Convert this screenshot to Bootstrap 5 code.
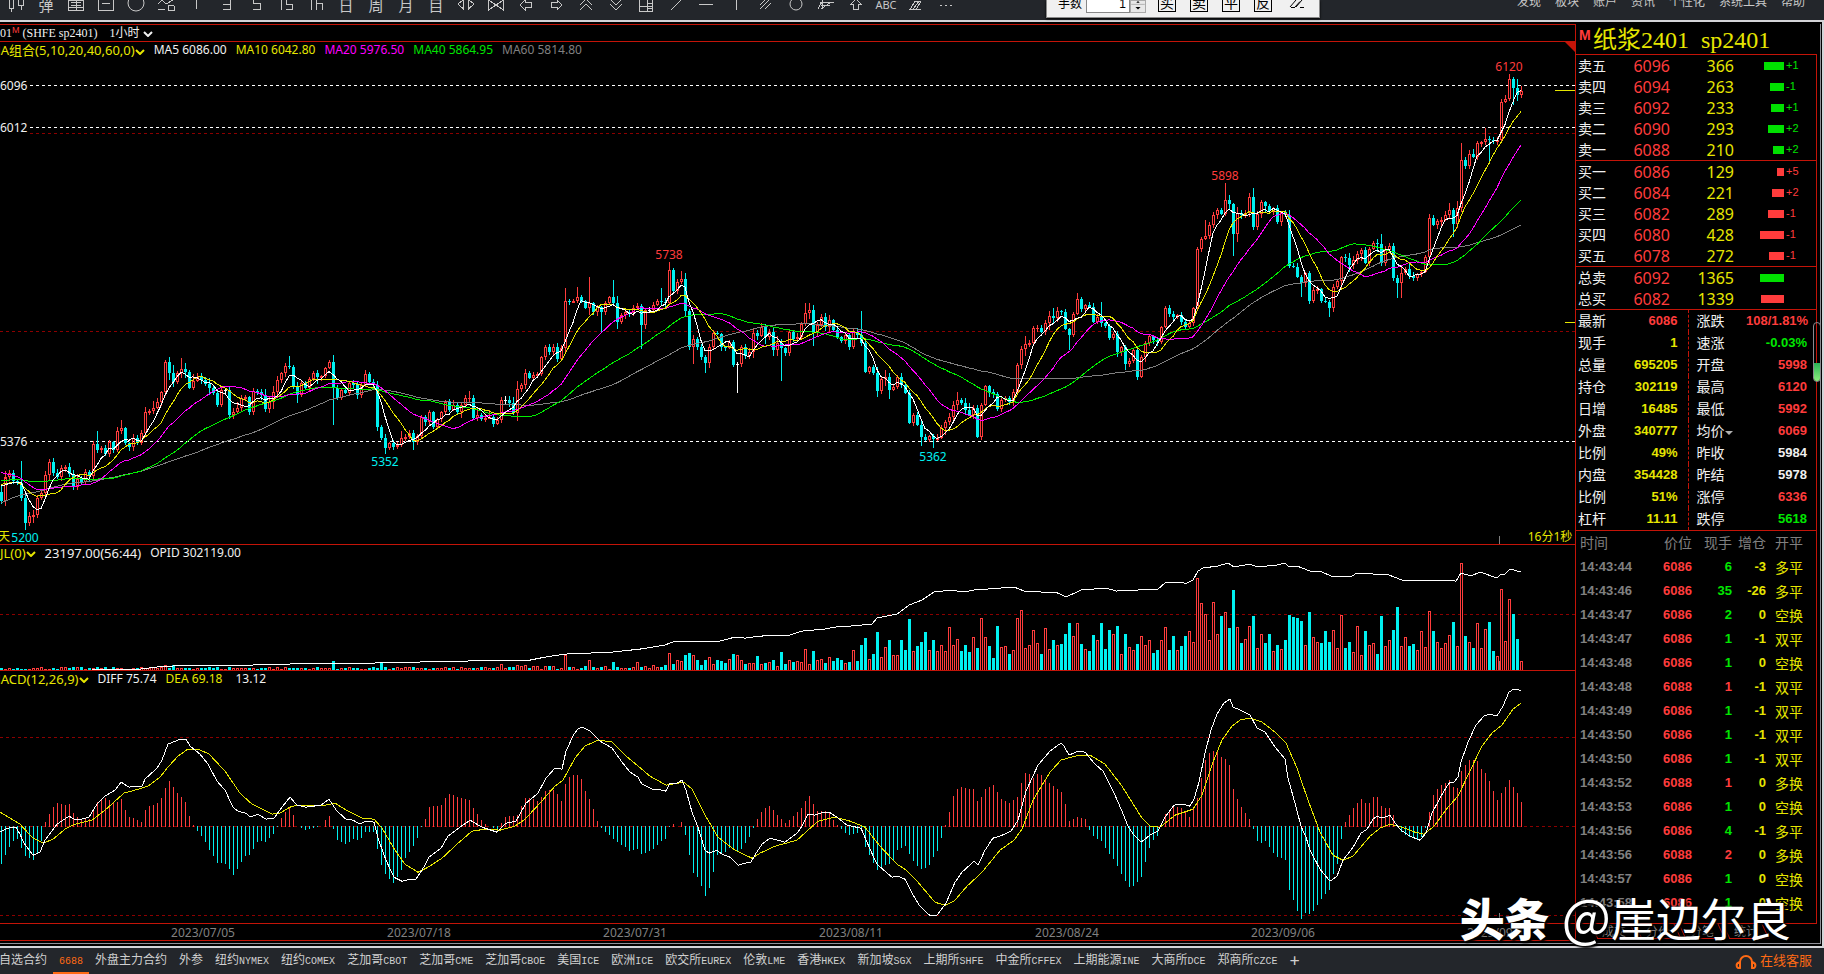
<!DOCTYPE html>
<html lang="zh-CN">
<head>
<meta charset="utf-8">
<title>纸浆2401 sp2401</title>
<meta name="viewport" content="width=device-width, initial-scale=1">
<link href="https://cdn.jsdelivr.net/npm/bootstrap@5.3.0/dist/css/bootstrap.min.css" rel="stylesheet">
<style>
:root{--up:#ff3c3c;--down:#00f0f0;--yel:#e6e600;--grn:#00e600;--line:#c41408;--gry:#808080}
body{background:#23262b;color:#f0f0f0;font-family:"Noto Sans","Noto Sans CJK SC",sans-serif;font-size:12px;line-height:16px;overflow:hidden}
button{font:inherit;color:inherit;background:none;border:0;padding:0}
.c-up{color:var(--up)}.c-down{color:var(--down)}.c-yel{color:var(--yel)}.c-grn{color:var(--grn)}.c-gry{color:var(--gry)}.c-mag{color:#ff00ff}
/* top bar */
.topbar{height:20px;color:#c8c8c8}
.tools{height:20px;padding-left:1px}
.tools button{width:30px;height:20px;flex:none;position:relative;overflow:hidden}
.tools svg{display:block;width:30px;height:20px;fill:none;stroke:#c8c8c8;shape-rendering:crispEdges}
.tools .glyph{font-size:15px;line-height:20px;margin-top:-10px;height:20px}
.mainmenu{gap:14px;padding-right:19px;margin-top:-6px;white-space:nowrap}
.mainmenu a{color:#c8c8c8;text-decoration:none}
.order{left:1046px;top:0;width:274px;height:18px;background:#f0f0f0;color:#000;border:1px solid #8a8a8a;border-top:0;z-index:5;padding-left:11px;box-shadow:0 1px 2px #000}
.order label{margin-top:-4px;width:28px}
.order input{width:44px;height:19px;margin-top:-6px;border:1px solid #888;background:#fff;text-align:right;padding:0 3px;font:12px "Liberation Sans",sans-serif;border-radius:0}
.spin{width:16px;height:13px;border:1px solid #aaa;background:#e8e8e8;margin-right:12px}
.obtn{width:18px;height:19px;margin-top:-7px;border:1px solid #000;margin-right:14px;font-size:14px;line-height:14px;overflow:hidden;position:relative}
/* workspace */
.work{border:2px solid #d4d4d8;border-left:0;background:#000;padding:2px 1px 2px 0;min-height:0}
.inner{border-right:1px solid #909098;border-bottom:1px solid #909098;padding:0 3px 2px 0;min-height:0}
.charts{min-width:0;border:1px solid var(--line);border-left:0}
.crow{height:16px;white-space:nowrap;flex:none;line-height:16px;gap:9px}
.crow .fn{font-size:13px}
.cutm{margin-left:-11px}
.symbol{height:17px;border-bottom:1px solid var(--line);font-family:"Liberation Serif","Noto Sans CJK SC",serif;flex:none;font-size:12px;line-height:16px}
.pane{min-height:0;position:relative;overflow:hidden;border-bottom:1px solid var(--line)}
.pane svg{display:block;width:100%;height:100%;position:absolute;inset:0}
.pin{position:absolute;transform:translate(-50%,-50%);line-height:14px;white-space:nowrap}
.pin.lv{left:0;transform:translateY(-50%);background:#000}
.chev{width:10px;height:6px;fill:none;stroke:currentColor;stroke-width:2}
.p1{flex:485 1 0}.p2{flex:109 1 0}.p3{flex:236 1 0}
.dates{height:16px;flex:none;position:relative;color:var(--gry);overflow:hidden}
.dates span{position:absolute;top:1px;line-height:15px;transform:translateX(-50%)}
/* quote side */
.side{width:241px;flex:none;position:relative}
.name{height:30px;flex:none;padding-left:3px;font:24px/32px "Liberation Serif","Noto Sans CJK SC",serif;color:var(--yel);white-space:nowrap}
.name b{font:bold 14px/22px "Liberation Sans",sans-serif;width:14px}
.box{border-right:1px solid var(--line);border-top:1px solid var(--line)}
table{width:100%;table-layout:fixed;border-collapse:collapse}
td,th{padding:0;white-space:nowrap;font-weight:400}
.depth td{height:21px;line-height:20px;font-size:16px}
.depth th{font-size:14px;width:46px;padding-left:2px;line-height:20px}
.depth td:nth-child(2){width:48px;text-align:right;color:var(--up)}
.depth td:nth-child(3){width:64px;text-align:right;color:var(--yel)}
.depth td.dv{font:11px/19px "Liberation Sans",sans-serif}
.vbar{display:inline-block;height:8px;vertical-align:middle;margin-right:2px}
.vcell{display:inline-block;width:52px;text-align:right}
.stats td,.stats th{height:22px;line-height:22px}
.stats th{font-size:14px;width:42px;padding-left:2px}
.stats td{font:bold 13px/22px "Liberation Sans",sans-serif;text-align:right}
.stats th.second{width:58px;padding-left:8px}
.stats tr>td:nth-child(2){border-right:1px dashed var(--line);padding-right:10px;width:70px}
.stats tr>td:nth-child(4){padding-right:9px}
.stats .c-w{color:#f0f0f0}
.caret{display:inline-block;border:4px solid transparent;border-top-color:#b0b0b0;border-bottom:0;vertical-align:1px}
.ticks td,.ticks th{height:24px;line-height:24px}
.ticks th{font-size:14px;color:var(--gry);text-align:right;height:22px;line-height:24px}
.ticks td{font:bold 13px/20px "Liberation Sans",sans-serif;text-align:right}
.ticks td:last-child{font:14px/24px "Noto Sans CJK SC",sans-serif;color:var(--yel)}
.ticks td:first-child,.ticks th:first-child{text-align:left;padding-left:4px}
.ticks td:nth-child(2){color:var(--up)}
.ticks td:nth-child(4){color:var(--yel)}
.scroller{right:-4px;top:298px;width:8px;height:60px;border:1px solid #8a8a90;border-radius:4px}
.scroller i{position:absolute;left:0;right:0;bottom:0;height:18px;background:linear-gradient(#2bb356,#8cf07c);border-radius:0 0 3px 3px}
.sidetabs{height:18px;color:var(--gry);padding-left:16px;line-height:16px;border-top:1px solid var(--line)}
.sidetabs button{width:44px;height:16px;position:relative}
.sidetabs button::before{content:"";position:absolute;inset:0 2px 1px;border:1px solid var(--line);border-top:0;transform:skewX(25deg)}
.mark-sign{right:33px;bottom:28px;color:#fff;font-family:"Noto Sans CJK SC",sans-serif;line-height:56px;font-size:45px;z-index:6;text-shadow:0 0 3px #000,2px 2px 2px #000;white-space:nowrap;pointer-events:none}
.mark-sign b{font-weight:900;font-size:45px;margin-right:12px}
.mark-sign .at{font-size:52px}
/* bottom bar */
.tabs{height:26px;gap:12px;margin-left:-1px;white-space:nowrap}
.tabs a{color:#d0d0d0;text-decoration:none;line-height:24px;height:26px}
.tabs i{font:10px "Liberation Mono",monospace}
.tabs .cur{color:#ff6a14;box-shadow:inset 0 -2px #ff6a14;padding:0 6px;margin:0 -6px}
.help{color:#ff6a14;font-size:13px;text-decoration:none;line-height:24px;padding-right:12px}
</style>
</head>
<body class="d-flex flex-column vh-100">
<header class="topbar d-flex justify-content-between position-relative flex-shrink-0">
  <div class="tools d-flex" id="tools"></div>
  <form class="order position-absolute d-flex align-items-start">
    <label for="lots">手数</label><input id="lots" type="text" value="1">
    <svg class="spin" viewBox="0 0 16 13"><path d="M0 4H16" stroke="#aaa"/><path d="M5 7H11L8 10Z"/><path d="M6 2H10L8 0Z"/></svg>
    <button type="button" class="obtn">买</button><button type="button" class="obtn">卖</button><button type="button" class="obtn">平</button><button type="button" class="obtn">反</button>
    <svg width="22" height="14" fill="none" stroke="#000"><path d="M5 7.500H9M4 7L10 0M9 7L14 1.500M10 7L16 0M14 7.500H18" /></svg>
  </form>
  <nav class="mainmenu d-flex"><a href="#">发现</a><a href="#">板块</a><a href="#">账户</a><a href="#">资讯</a><a href="#">个性化</a><a href="#">系统工具</a><a href="#">帮助</a></nav>
</header>

<main class="work flex-grow-1 d-flex">
 <div class="inner d-flex flex-grow-1">
  <section class="charts d-flex flex-column flex-grow-1">
    <div class="symbol">01<sup class="c-up" style="font-family:Liberation Sans">M</sup>&nbsp;(SHFE sp2401)&nbsp; &nbsp;&nbsp;1小时 <svg class="chev"><path d="M1 1L5 5L9 1"/></svg></div>
    <div class="crow d-flex"><span class="c-yel fn cutm">MA组合(5,10,20,40,60,0)<svg class="chev"><path d="M1 1L5 5L9 1"/></svg></span><span>MA5 6086.00</span><span class="c-yel">MA10 6042.80</span><span class="c-mag">MA20 5976.50</span><span class="c-grn">MA40 5864.95</span><span class="c-gry">MA60 5814.80</span></div>
    <div class="pane p1" id="price"></div>
    <div class="crow d-flex"><span class="c-yel fn">JL(0)<svg class="chev"><path d="M1 1L5 5L9 1"/></svg></span><span class="fn">23197.00(56:44)</span><span>OPID 302119.00</span></div>
    <div class="pane p2" id="volume"></div>
    <div class="crow d-flex"><span class="c-yel fn cutm">MACD(12,26,9)<svg class="chev"><path d="M1 1L5 5L9 1"/></svg></span><span>DIFF 75.74</span><span class="c-yel">DEA 69.18</span><span class="ps-1">13.12</span></div>
    <div class="pane p3" id="macd"></div>
    <div class="dates" id="dates"></div>
  </section>

  <aside class="side d-flex flex-column">
    <div class="name d-flex"><b class="c-up">M</b><span>纸浆2401&ensp;sp2401</span></div>
    <div class="box"><table class="depth" id="sell"></table></div>
    <div class="box"><table class="depth" id="buy"></table></div>
    <div class="box"><table class="depth" id="total"></table></div>
    <div class="box"><table class="stats" id="stats"></table></div>
    <div class="box flex-grow-1 overflow-hidden"><table class="ticks" id="ticks"><colgroup><col style="width:60px"><col style="width:56px"><col style="width:40px"><col style="width:34px"><col style="width:37px"><col></colgroup></table></div>
    <div class="sidetabs d-flex"><button type="button">成交</button><button type="button">分价</button><button type="button">分笔</button><button type="button">统计</button></div>
    <div class="scroller position-absolute"><i></i></div>
  </aside>
 </div>
</main>
<div class="mark-sign position-absolute"><b>头条</b><span class="at">@</span>崖边尔良</div>

<footer class="d-flex justify-content-between flex-shrink-0 overflow-hidden">
  <nav class="tabs d-flex" id="tabs"></nav>
  <a class="help" href="#"><svg width="22" height="18" viewBox="0 0 22 18" fill="none" stroke="#ff6a14" stroke-width="2"><path d="M5 13V9a6 6 0 0 1 12 0v4"/><path d="M5 9c-5 1-4 7 0 6zM17 9c5 1 4 7 0 6z"/></svg> 在线客服</a>
</footer>

<script src="https://cdn.jsdelivr.net/npm/bootstrap@5.3.0/dist/js/bootstrap.bundle.min.js"></script>
<script>
const $ = id => document.getElementById(id);
const UP='#ff3c3c', DN='#00f0f0', YE='#e6e600';

/* toolbar */
const P = d => `<svg viewBox="0 0 30 20"><path d="${d}"/></svg>`;
const G = t => `<div class="glyph">${t}</div>`;
$('tools').innerHTML = [
 P('M8 0V8H12V0M10 8V12M17 0V5H22V0M20 5V10'), G('弹'), P('M8 .5H22.5V10.5H7.5V0M10 2H20M10 5H20M7 7.5H23M15 0V10'),
 P('M7.5 0V10.5H22.5V0M11 3.5H19'), '<svg viewBox="0 0 30 20" style="shape-rendering:auto"><circle cx="15" cy="3" r="8"/></svg>',
 P('M7 4L11 0L15 4L22 0M7 9.5H14M17 5.5H23M17 5V10H23V6'), P('M15.5 0V9'), P('M12 4.5H19M19.5 0V9.5H12'), P('M12.5 0V3.5H19.5V9.5H12'),
 P('M10.5 0V10M15.5 0V4.5H21.5V9.5H15'), P('M10.5 0V10M15.5 0V10M15.5 3.5H21.5V10'), G('日'), G('周'), G('月'), G('目'),
 P('M12.5 0V9L7 4L12 0M17.5 0V9L23 4L18 0'), P('M7.5 0V10L22.5 0V10L7.5 0'), P('M20 2.5H14V0L9 5L14 10V7.5H20Z'), P('M10 2.5H16V0L21 5L16 10V7.5H10Z'),
 P('M9 5L15 -1L21 5M9 10L15 4L21 10'), P('M9 -1L15 5L21 -1M9 4L15 10L21 4'), P('M8.5 0V11.5H21.5V0M8 6.5H21M16.5 0V11M17 3.5H21M17 8.5H21'),
 P('M10 10L20 0'), P('M8 4.5H22'), P('M15.5 0V10'), P('M9 5L15 -1M9 9L19 -1M14 9L20 3'),
 '<svg viewBox="0 0 30 20" style="shape-rendering:auto"><circle cx="15" cy="4" r="6"/></svg>', P('M9 2.5H23M7 9L12 0M10 9L20 2M10 5.5H19M11 0V8'),
 P('M12.5 9.5V4H10L15 -1L20 4H17.5V9.5Z'), '<div class="glyph" style="font-size:11px">ABC</div>', P('M9 9.5L14 1H20L15 9.5ZM12 9.5L18 1M15 9.5H20'), P('M9 5.5H11M14 5.5H16M19 5.5H21')
].map(s=>`<button type="button">${s}</button>`).join('');

/* closing levels on the drawing grid, one bar every 4 units; each row starts at the given x */
const rows = {
1:[500,477,473,480,482,497,522,515,514,497,492,475,462,473,477,468,467,474,486,478],
81:[481,472,476,444,450,448,454,442,450,431,428,443,447,438,443,433,412,411,408,402],
161:[392,362,373,382,373,369,372,388,381,377,380,384,388,393,405,390,390,415,412,408],
241:[398,397,412,391,392,395,409,402,392,380,373,366,367,387,395,383,388,379,373,377],
321:[376,368,362,388,398,390,393,383,385,395,385,374,382,385,427,438,448,443,447,445],
401:[438,437,433,442,436,417,422,412,427,419,412,402,410,405,412,405,398,398,418,415],
481:[419,418,417,424,420,400,400,403,413,389,385,373,378,375,374,357,347,352,347,359],
561:[348,301,302,301,297,301,308,303,312,307,312,303,297,303,322,315,312,313,308,306],
641:[325,310,310,305,301,302,303,270,291,282,279,311,347,339,347,357,363,347,333,334],
721:[347,348,342,365,364,347,356,352,333,336,327,337,332,350,343,348,353,332,339,337],
801:[324,313,310,332,325,317,327,320,330,337,341,335,347,332,335,343,372,367,373,391],
881:[379,377,390,387,377,385,393,423,415,425,437,440,436,439,438,428,422,417,405,400],
961:[403,410,415,408,437,405,386,392,394,409,400,398,402,392,365,349,344,343,328,328],
1041:[332,323,316,318,311,312,329,335,314,299,309,305,307,322,317,323,326,338,334,352],
1121:[347,364,361,350,377,357,343,336,340,342,327,308,314,317,315,322,327,323,308,249],
1201:[239,236,225,215,210,214,200,204,234,213,215,213,197,227,214,202,206,211,208,222],
1281:[212,215,266,267,277,283,273,301,290,289,301,302,308,287,281,257,258,265,260,254],
1361:[250,263,249,243,244,263,250,246,278,283,273,269,276,278,274,272,257,218,225,221],
1441:[220,215,210,224,208,160,166,154,157,143,142,139,140,141,140,102,99,79,88,95,91]};
const close=[]; for(const k in rows) close.push(...rows[k]);
const X=i=>1+4*i;
let seed=7; const rnd=()=>(seed=(seed*16807)%2147483647)/2147483647;
/* extreme wicks: x -> [high, low] */
const wick={21:[461,0],25:[0,529],97:[431,0],165:[360,0],169:[357,0],181:[358,0],289:[356,0],333:[355,425],365:[370,0],385:[0,454],413:[0,450],469:[391,0],565:[288,0],577:[287,0],589:[277,0],601:[0,333],613:[280,0],641:[0,349],661:[288,0],669:[262,0],681:[271,0],693:[0,364],705:[0,373],737:[0,393],781:[0,381],805:[303,0],813:[305,346],861:[311,0],877:[0,397],889:[0,399],921:[0,446],933:[0,448],957:[392,0],977:[0,438],1069:[0,350],1077:[293,0],1101:[302,0],1137:[0,380],1141:[0,378],1205:[220,0],1225:[183,0],1233:[0,256],1253:[188,0],1301:[0,297],1329:[0,317],1381:[234,0],1397:[0,298],1401:[0,298],1453:[0,237],1461:[143,0],1489:[0,163],1485:[128,0],1509:[74,0],1513:[77,105],1517:[79,0],1521:[86,0]};
const open=i=>i?close[i-1]:491;
const color=i=>close[i]<=open(i)?UP:DN;
const hline=(y,c)=>`<path d="M0 ${y}.5H1575" stroke="${c}" stroke-dasharray="3 3"/>`;
const line=(pts,c)=>`<polyline points="${pts.map(p=>p.join()).join(' ')}" fill="none" stroke="${c}"/>`;
const svg=(y,h,body)=>`<svg viewBox="0 ${y} 1575 ${h}" preserveAspectRatio="none" shape-rendering="crispEdges" fill="none">${body}</svg>`;
const pin=(x,y,y0,h,t,c)=>`<span class="pin ${c}" style="left:${x/15.75}%;top:${(y-y0)/h*100}%">${t}</span>`;
const level=(y,t)=>`<span class="pin lv" style="top:${(y-58)/4.86}%">${t}</span>`;

let s=hline(133,'#8c0000')+hline(331,'#8c0000')+hline(85,'#fff')+hline(127,'#fff')+hline(441,'#fff');
close.forEach((c,i)=>{
  const x=X(i), o=open(i), w=wick[x]||[0,0], k=color(i), big=rnd()<.25?7:3;
  const t=Math.min(o,c), b=Math.max(o,c,t+1);
  const hi=w[0]||Math.round(t-rnd()*big-1), lo=w[1]||Math.round(b+rnd()*big+1);
  if(Math.abs(o-c)<1||x==737){s+=`<path d="M${x+.5} ${hi}V${lo}M${x-1} ${c+.5}H${x+2}" stroke="${i%2&&x!=737?k:'#fff'}"/>`;return}
  s+=`<path d="M${x+.5} ${hi}V${t}M${x+.5} ${b}V${lo}" stroke="${k}"/>`;
  s+= k==UP?`<rect x="${x-.5}" y="${t+.5}" width="2" height="${Math.max(1,b-t-1)}" stroke="${k}"/>`:`<rect x="${x-1}" y="${t}" width="3" height="${b-t}" fill="${k}"/>`;
});
/* bars before the visible range, used by the averages */
const past=[]; for(let i=0;i<60;i++) past.push(i<20?590-4*i:i<40?490:i<50?458:482);
const all=past.concat(close);
[[60,'#808080'],[40,'#00f000'],[20,'#ff00ff'],[10,YE],[5,'#fff']].forEach(([n,c])=>{
  s+=line(close.map((_,i)=>[X(i),Math.round(all.slice(i+61-n,i+61).reduce((a,b)=>a+b)/n*10)/10]),c)});
s+='<path d="M1555 90.5H1575M1565 322.5H1575" stroke="#e6e600"/><path d="M1499.5 535V544" stroke="#808080"/>';
$('price').innerHTML=svg(58,485,s)+level(86,'6096')+level(128,'6012')+level(442,'5376')
 +pin(1509,67,58,485,'6120','c-up')+pin(1225,176,58,485,'5898','c-up')+pin(669,255,58,485,'5738','c-up')
 +pin(385,462,58,485,'5352','c-down')+pin(933,457,58,485,'5362','c-down')+pin(25,537,58,485,'5200','c-down')+pin(4,536,58,485,'天','c-yel')+pin(1550,536,58,485,'16分1秒','c-yel');
document.querySelector('.crow').insertAdjacentHTML('beforeend','<svg width="10" height="10" class="ms-auto"><path d="M0 0H10V10Z" fill="#c41408"/></svg>');

/* volume and open interest */
const volL={165:5,173:5,333:9,381:7,501:6,565:15,589:10,613:8,637:8,669:17,673:6,677:10,681:9,685:15,689:17,693:15,697:10,701:5,705:10,709:13,713:6,717:10,721:9,725:7,729:11,733:16,737:15,741:10,745:6,749:7,753:7,757:14};
const volR=[6,7,8,10,4,18,6,10,8,9,8,21,6,19,10,11,7,13,9,12,10,7,8,20,9,25,32,11,16,38,13,23,30,15,15,30,20,51,19,24,28,38,20,30,19,25,19,43,25,31,19,25,18,33,22,52,33,24,12,44,23,24,16,20,52,60,22,25,40,27,16,42,21,30,25,26,36,47,34,47,26,21,19,35,30,47,21,40,36,44,16,36,23,20,26,34,25,30,17,20,30,43,20,34,20,24,34,39,28,92,67,56,30,68,36,54,58,42,80,43,27,31,44,54,22,36,27,36,19,25,21,30,55,53,52,49,25,58,33,28,27,39,28,40,22,55,22,28,18,44,15,39,25,27,16,54,24,30,40,63,24,33,24,26,20,39,23,59,39,28,22,27,35,48,24,107,34,28,22,47,22,41,48,19,14,81,29,71,56,31,9];
s=hline(614,'#8c0000');
close.forEach((_,i)=>{
  const x=X(i), v=x>=761?volR[(x-761)/4]:(volL[x]||Math.round(1+rnd()*(x>500?4:2))), k=color(i);
  s+= k==UP?`<path d="M${x-.5} 670V${670.5-v}H${x+1.5}V670" stroke="${k}"/>`:`<rect x="${x-1}" y="${670-v}" width="3" height="${v}" fill="${k}"/>`;
});
const pairs=t=>t.trim().split(/\s+/).map(p=>p.split(',').map(Number));
s+=line(pairs(`92,669 140,669 164,666 250,665 280,664 370,663 460,661 530,660 545,657 565,654 612,652 640,649 665,645 672,642 685,641 720,641 735,637 745,638 760,636 790,635 802,631 825,629 835,627 850,626 872,624 877,618 897,614 909,605 922,600 934,592 951,590 964,592 974,590 1014,587 1024,591 1058,593 1066,597 1081,590 1106,588 1116,591 1158,589 1165,583 1183,582 1185,584 1193,580 1198,571 1203,568 1218,566 1228,563 1234,567 1250,564 1257,567 1277,565 1285,563 1288,566 1297,566 1310,571 1320,571 1331,576 1352,576 1357,573 1389,575 1402,580 1456,581 1461,573 1471,576 1480,572 1497,578 1501,574 1505,574 1510,569 1521,572`),'#fff')+'<path d="M1499.5 661V670" stroke="#808080"/>';
$('volume').innerHTML=svg(561,109,s);

/* MACD */
const diff=pairs(`0,832 8,828 16,827 20,834 24,843 33,855 40,852 45,840 57,824 69,816 74,819 81,819 89,817 97,804 105,796 115,790 121,782 129,787 142,786 145,779 157,768 162,760 168,744 178,740 186,739 190,746 200,754 208,764 217,781 225,790 233,807 238,811 246,813 250,817 258,814 266,819 274,818 282,807 290,797 297,805 306,807 321,805 329,799 337,811 346,819 353,820 360,824 366,821 374,822 378,838 386,860 394,877 402,881 410,879 416,879 425,865 429,857 441,848 448,836 460,827 470,820 482,827 497,832 506,823 516,821 526,803 538,793 546,778 555,768 562,769 566,751 574,734 578,729 582,727 590,731 600,741 612,748 622,762 630,772 638,777 642,784 652,789 662,790 666,791 670,783 677,783 682,780 686,790 692,812 698,827 705,850 709,853 717,850 722,854 730,857 738,865 745,863 751,862 756,853 762,844 770,838 785,842 797,833 802,826 808,814 815,815 824,812 829,812 837,817 847,825 861,828 870,849 877,864 885,871 892,877 898,876 905,879 912,893 920,906 926,912 930,915 937,915 946,903 955,882 962,872 974,861 978,865 985,850 993,838 1000,836 1011,831 1018,820 1026,791 1038,765 1050,751 1061,743 1064,746 1069,755 1078,751 1085,752 1094,763 1103,771 1115,795 1122,811 1128,826 1134,835 1141,842 1150,835 1158,831 1165,817 1174,805 1183,804 1190,806 1194,799 1199,782 1205,753 1211,730 1217,714 1224,703 1230,699 1233,707 1240,710 1250,715 1257,728 1265,732 1275,747 1285,759 1288,778 1295,803 1301,826 1306,837 1310,850 1320,869 1330,881 1337,876 1343,860 1353,847 1361,833 1367,829 1373,819 1377,816 1382,818 1390,815 1396,824 1401,830 1410,836 1420,840 1426,833 1432,813 1441,796 1449,783 1454,782 1458,777 1461,762 1468,742 1476,725 1484,716 1490,714 1497,716 1503,706 1509,692 1514,689 1519,690 1521,691`);
const dea=pairs(`0,812 20,824 33,838 43,843 53,839 65,829 75,824 92,820 105,810 124,793 135,790 148,786 160,777 168,767 178,756 188,749 198,749 209,754 225,771 240,793 252,804 272,814 280,813 290,807 297,805 325,805 335,803 348,811 362,818 374,819 382,828 395,850 405,864 418,872 428,867 442,858 458,843 472,831 485,829 500,830 515,826 525,819 540,803 555,786 563,780 575,758 585,746 598,740 612,742 625,755 650,776 666,785 684,782 692,789 705,815 718,837 735,850 752,858 760,853 775,846 797,840 808,830 818,821 835,817 850,821 865,827 880,846 897,864 905,869 918,882 935,902 945,905 954,901 967,886 982,872 1000,850 1014,840 1022,829 1033,800 1050,772 1061,760 1075,756 1090,755 1105,764 1122,786 1142,818 1150,826 1160,827 1175,815 1193,809 1202,795 1213,762 1222,740 1232,726 1240,720 1250,718 1262,722 1275,732 1286,743 1297,768 1308,800 1320,832 1333,855 1343,860 1353,856 1370,836 1380,828 1390,824 1402,827 1415,832 1424,834 1434,826 1448,807 1458,796 1467,777 1482,746 1492,733 1502,725 1513,709 1521,703`);
const at=(p,x)=>{let j=1;while(j<p.length-1&&p[j][0]<x)j++;const[a,b]=p[j-1],[c,d]=p[j];return b+(d-b)*(x-a)/(c-a)};
s=hline(737,'#8c0000')+hline(826,'#8c0000')+hline(915,'#8c0000');
close.forEach((_,i)=>{const x=X(i),h=Math.round(2*(at(dea,x)-at(diff,x)));
  if(h)s+=`<path d="M${x+.5} ${h>0?827:826}V${826-h}" stroke="${h>0?UP:DN}"/>`});
s+=line(dea,YE)+line(diff,'#fff')+'<path d="M1499.5 913V923" stroke="#808080"/>';
$('macd').innerHTML=svg(687,236,s);
$('dates').innerHTML=['2023/07/05','2023/07/18','2023/07/31','2023/08/11','2023/08/24','2023/09/06','2023/09/19'].map((d,i)=>`<span style="left:${(203+216*i)/15.75}%">${d}</span>`).join('');

/* quotes */
const depth=(id,r)=>$(id).innerHTML=r.map(([n,p,v,w,d,c])=>`<tr><th scope="row">${n}</th><td>${p}</td><td>${v}</td><td class="dv" style="color:${c}"><span class="vcell"><i class="vbar" style="width:${w}px;background:${c}"></i></span>${d}</td></tr>`).join('');
const g='#00e000';
depth('sell',[['卖五',6096,366,20,'+1',g],['卖四',6094,263,14,'-1',g],['卖三',6092,233,13,'+1',g],['卖二',6090,293,16,'+2',g],['卖一',6088,210,11,'+2',g]]);
depth('buy',[['买一',6086,129,7,'+5',UP],['买二',6084,221,12,'+2',UP],['买三',6082,289,16,'-1',UP],['买四',6080,428,24,'-1',UP],['买五',6078,272,15,'-1',UP]]);
depth('total',[['总卖',6092,1365,24,'',g],['总买',6082,1339,23,'',UP]]);
$('stats').innerHTML=[['最新','6086','up','涨跌','108/1.81%','up'],['现手','1','yel','速涨','-0.03%','grn'],['总量','695205','yel','开盘','5998','up'],['持仓','302119','yel','最高','6120','up'],['日增','16485','yel','最低','5992','up'],['外盘','340777','yel','均价<i class="caret"></i>','6069','up'],['比例','49%','yel','昨收','5984','w'],['内盘','354428','yel','昨结','5978','w'],['比例','51%','yel','涨停','6336','up'],['杠杆','11.11','yel','跌停','5618','grn']]
 .map(r=>`<tr><th scope="row">${r[0]}</th><td class="c-${r[2]}">${r[1]}</td><th scope="row" class="second">${r[3]}</th><td class="c-${r[5]}">${r[4]}</td></tr>`).join('');
$('ticks').insertAdjacentHTML('beforeend','<tr><th>时间</th><th>价位</th><th>现手</th><th>增仓</th><th>开平</th><th></th></tr>'+
[['44',6086,6,-3,'多平'],['46',6086,35,-26,'多平'],['47',6086,2,0,'空换'],['47',6086,1,-1,'双平'],['48',6086,1,0,'空换'],['48',6088,1,-1,'双平'],['49',6086,1,-1,'双平'],['50',6086,1,-1,'双平'],['50',6086,1,-1,'双平'],['52',6088,1,0,'多换'],['53',6086,1,0,'空换'],['56',6086,4,-1,'多平'],['56',6088,2,0,'多换'],['57',6086,1,0,'空换'],['58',6086,1,0,'空换']]
 .map(r=>`<tr><td class="c-gry">14:43:${r[0]}</td><td>${r[1]}</td><td class="c-${r[1]==6088?'up':'grn'}">${r[2]}</td><td>${r[3]}</td><td>${r[4]}</td></tr>`).join(''));

$('tabs').innerHTML='自选合约 6688 外盘主力合约 外参 纽约NYMEX 纽约COMEX 芝加哥CBOT 芝加哥CME 芝加哥CBOE 美国ICE 欧洲ICE 欧交所EUREX 伦敦LME 香港HKEX 新加坡SGX 上期所SHFE 中金所CFFEX 上期能源INE 大商所DCE 郑商所CZCE'.split(' ')
 .map(t=>`<a href="#"${t=='6688'?' class="cur"':''}>${t.replace(/[A-Z0-9]+/,'<i>$&</i>')}</a>`).join('')+'<a href="#" style="font-size:18px">+</a>';
</script>
</body>
</html>
